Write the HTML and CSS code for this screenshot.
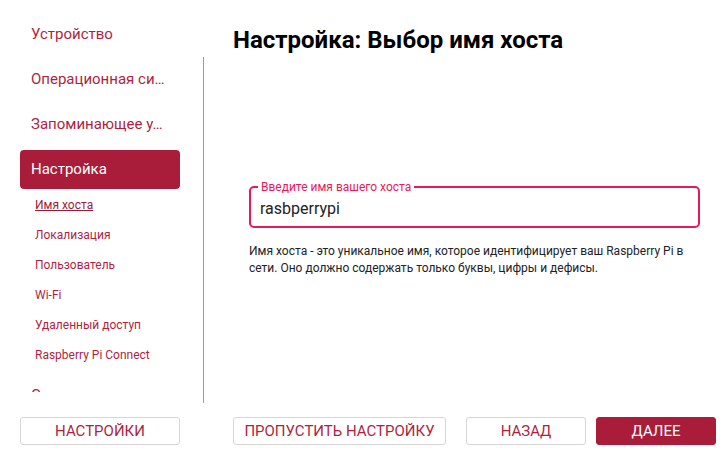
FILE: index.html
```html
<!DOCTYPE html>
<html lang="ru">
<head>
  <meta charset="UTF-8">
  <title>Raspberry Pi Imager</title>
  <link rel="stylesheet" href="styles.css">
</head>
<body>
<div class="window">
  <div class="main">
    <nav class="sidebar">
      <div class="step">Устройство</div>
      <div class="step">Операционная си…</div>
      <div class="step">Запоминающее у…</div>
      <div class="step active">Настройка</div>
      <div class="substeps">
        <div class="sub current">Имя хоста</div>
        <div class="sub">Локализация</div>
        <div class="sub">Пользователь</div>
        <div class="sub">Wi-Fi</div>
        <div class="sub">Удаленный доступ</div>
        <div class="sub">Raspberry Pi Connect</div>
      </div>
      <div class="step">Сохранить</div>
    </nav>
    <div class="divider"></div>
    <section class="content">
      <h1>Настройка: Выбор имя хоста</h1>
      <fieldset class="field">
        <legend>Введите имя вашего хоста</legend>
        <input type="text" value="rasbperrypi">
      </fieldset>
      <p class="hint">Имя хоста - это уникальное имя, которое идентифицирует ваш Raspberry Pi в сети. Оно должно содержать только буквы, цифры и дефисы.</p>
    </section>
  </div>
  <footer class="footer">
    <button class="btn btn-settings">Настройки</button>
    <button class="btn btn-skip">Пропустить настройку</button>
    <div class="spacer"></div>
    <button class="btn">Назад</button>
    <button class="btn btn-primary">Далее</button>
  </footer>
</div>
</body>
</html>
```

FILE: styles.css
```css
body {
  margin: 0;
  font-family: Roboto, "Liberation Sans", sans-serif;
  background: #fff;
  color: #222;
}
.window {
  width: 727px;
  height: 461px;
  display: flex;
  flex-direction: column;
  overflow: hidden;
}
.main {
  display: flex;
  height: 403px;
}
.sidebar {
  width: 160px;
  height: 377px;
  padding: 15px 23px 0 20px;
  overflow: hidden;
  flex-shrink: 0;
}
.step {
  height: 39px;
  line-height: 39px;
  padding-left: 11px;
  margin-bottom: 6px;
  font-size: 15px;
  color: #b01f3e;
  border-radius: 4px;
  white-space: nowrap;
}
.step.active {
  background-color: #a91d3a;
  color: #fff;
  margin-bottom: 1px;
}
.substeps {
  margin-bottom: 6px;
}
.sub {
  height: 30px;
  line-height: 30px;
  padding-left: 15px;
  font-size: 12px;
  color: #b01f3e;
}
.sub.current {
  color: #9c1c37;
  text-decoration: underline;
}
.divider {
  width: 1px;
  background-color: #9a9a9a;
  margin-top: 57px;
  height: 346px;
  flex-shrink: 0;
}
.content {
  flex: 1;
  padding: 26px 27px 0 29px;
}
h1 {
  margin: 0;
  font-size: 24px;
  line-height: 28px;
  font-weight: 700;
  color: #000;
}
.field {
  margin: 126px 0 0 16px;
  padding: 0 9px 4px;
  border: 2px solid #e8195a;
  border-radius: 5px;
}
.field legend {
  padding: 0 3px;
  margin-left: -2px;
  font-size: 12px;
  line-height: 14px;
  color: #e8195a;
}
.field input {
  border: none;
  outline: none;
  padding: 0;
  width: 100%;
  height: 28px;
  font-family: inherit;
  font-size: 16px;
  color: #222;
  background: transparent;
}
.hint {
  margin: 15px 0 0 16px;
  font-size: 12px;
  line-height: 17px;
  color: #222;
}
.footer {
  display: flex;
  align-items: flex-start;
  padding: 14px 11px 0 20px;
}
.btn {
  height: 28px;
  width: 120px;
  border: 1px solid #d6d6d6;
  border-radius: 3px;
  background: #fff;
  color: #b01f3e;
  font-family: inherit;
  font-size: 15px;
  text-transform: uppercase;
  padding: 0;
}
.btn-settings {
  width: 160px;
  margin-right: 53px;
}
.btn-skip {
  width: 213px;
}
.spacer {
  flex: 1;
}
.btn-primary {
  margin-left: 10px;
  background-color: #a91d3a;
  border-color: #a91d3a;
  color: #fff;
}
```
